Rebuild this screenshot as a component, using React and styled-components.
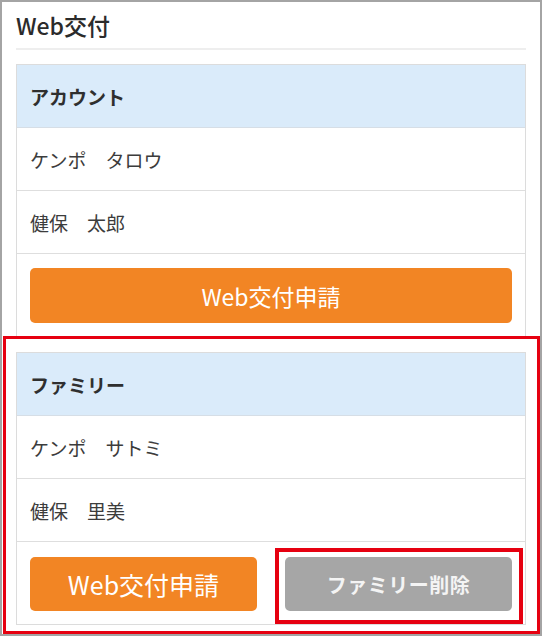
import React from "react";
import styled, { createGlobalStyle } from "styled-components";

const Global = createGlobalStyle`
  html, body { margin: 0; padding: 0; background: #fff; }
  * { box-sizing: border-box; }
  body {
    font-family: "Noto Sans CJK JP", "Noto Sans", sans-serif;
    color: #333;
  }
`;

const Frame = styled.div`
  width: 542px;
  height: 636px;
  border: 2px solid #a4a4a4;
  background: #fff;
  display: flex;
  flex-direction: column;
`;

const Section = styled.div`
  padding: 0 14px;
`;

const Title = styled.h1`
  margin: 0;
  padding: 8px 0 8px 0;
  font-size: 23px;
  line-height: 30px;
  font-weight: 500;
  color: #2b2b2b;
  border-bottom: 2px solid #eeeeee;
`;

const Card = styled.div`
  margin-top: ${(p) => p.$top || 0}px;
  border: 1px solid #dcdcdc;
  background: #fff;
`;

const CardHead = styled.div`
  height: 63px;
  display: flex;
  align-items: center;
  padding-left: 13px;
  background: #daebfa;
  border-bottom: 1px solid #d6dee6;
  font-size: 19px;
  font-weight: 700;
  color: #2f2f2f;
`;

const Row = styled.div`
  height: 63px;
  display: flex;
  align-items: center;
  padding-left: 13px;
  border-bottom: 1px solid #dedede;
  font-size: 19px;
  color: #3c3c3c;
  white-space: pre;
`;

const Actions = styled.div`
  display: flex;
  gap: 28px;
  padding: ${(p) => p.$pad};
`;

const Button = styled.button`
  flex: 1;
  height: ${(p) => p.$h}px;
  border: none;
  border-radius: 5px;
  background: ${(p) => (p.$gray ? "#a6a6a6" : "#f28524")};
  color: ${(p) => (p.$gray ? "#f4f4f4" : "#ffffff")};
  font-family: inherit;
  font-size: ${(p) => p.$size}px;
  font-weight: ${(p) => (p.$gray ? 700 : 400)};
  letter-spacing: ${(p) => (p.$gray ? "0.5px" : "0")};
  padding: 0;
  cursor: pointer;
  display: flex;
  align-items: center;
  justify-content: center;
`;

/* red outline around the family block */
const Marked = styled.div`
  margin: -2px 0 0 1px;
  border: 3px solid #e60010;
  padding: 13px 11px 6px 10px;
`;

/* red outline drawn over the delete button */
const MarkedCell = styled.div`
  flex: 1;
  display: flex;
  position: relative;

  &::after {
    content: "";
    position: absolute;
    top: -9px;
    left: -10px;
    right: -11px;
    bottom: -13px;
    border: 4px solid #e60010;
    pointer-events: none;
  }
`;

export default function App() {
  return (
    <>
      <Global />
      <Frame>
        <Section>
          <Title>Web交付</Title>
          <Card $top={14}>
            <CardHead>アカウント</CardHead>
            <Row>ケンポ　タロウ</Row>
            <Row>健保　太郎</Row>
            <Actions $pad="14px 13px 14px 13px">
              <Button $h={55} $size={23}>Web交付申請</Button>
            </Actions>
          </Card>
        </Section>
        <Marked>
          <Card>
            <CardHead>ファミリー</CardHead>
            <Row>ケンポ　サトミ</Row>
            <Row>健保　里美</Row>
            <Actions $pad="15px 13px 13px 13px">
              <Button $h={54} $size={25}>Web交付申請</Button>
              <MarkedCell>
                <Button $h={54} $size={20} $gray>ファミリー削除</Button>
              </MarkedCell>
            </Actions>
          </Card>
        </Marked>
      </Frame>
    </>
  );
}
